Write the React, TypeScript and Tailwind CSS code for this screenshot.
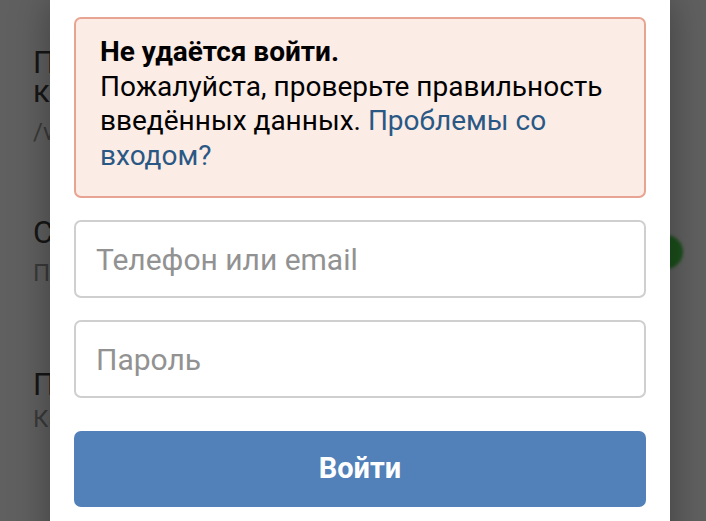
import React from 'react';

const font = { fontFamily: 'Roboto, "Noto Sans", Arial, sans-serif' };

function BackgroundPage() {
  return (
    <div className="flex flex-col pl-[33px] pr-[23px] pt-[48px]">
      <div className="flex flex-col">
        <span className="text-[31px] leading-[29px] text-[#161616]">Привязка аккаунта к</span>
        <span className="text-[31px] leading-[29px] text-[#161616]">короткому адресу</span>
        <span className="mt-[12px] text-[24px] leading-[28px] text-[#3a3a3a]">/vk.com/id</span>
      </div>
      <div className="mt-[70px] flex items-center justify-between">
        <div className="flex flex-col">
          <span className="text-[31px] leading-[34px] text-[#161616]">Сохранять вход</span>
          <span className="mt-[8px] text-[24px] leading-[30px] text-[#3a3a3a]">Помнить меня на этом устройстве</span>
        </div>
        <div className="h-[34px] w-[34px] rounded-full bg-[#1b4f1b] blur-[1.5px]" />
      </div>
      <div className="mt-[80px] flex flex-col">
        <span className="text-[31px] leading-[34px] text-[#161616]">Пароль приложения</span>
        <span className="mt-[2px] text-[24px] leading-[30px] text-[#3a3a3a]">Каждый раз запрашивать</span>
      </div>
    </div>
  );
}

function LoginModal() {
  return (
    <div className="absolute left-[50px] top-0 w-[620px] h-[560px] bg-white px-[24px] pt-[17px] shadow-[0_0_36px_rgba(0,0,0,0.35)]">
      <div className="rounded-[7px] border-2 border-[#e8a492] bg-[#fcece6] pl-[24px] pr-[20px] pt-[16px] pb-[23px] text-[28px] leading-[34.5px] text-black">
        <div className="font-bold">Не удаётся войти.</div>
        <div>
          Пожалуйста, проверьте правильность введённых данных.{' '}
          <span className="text-[#2a5885]">Проблемы со входом?</span>
        </div>
      </div>

      <div className="mt-[22px] flex flex-col gap-[22px]">
        <input
          className="h-[78px] w-full rounded-[7px] border-2 border-[#cfcfcf] bg-white px-[20px] text-[30px] text-black outline-none placeholder:text-[#929292]"
          style={font}
          placeholder="Телефон или email"
        />
        <input
          type="password"
          className="h-[78px] w-full rounded-[7px] border-2 border-[#cfcfcf] bg-white px-[20px] text-[30px] text-black outline-none placeholder:text-[#929292]"
          style={font}
          placeholder="Пароль"
        />
      </div>

      <button className="mt-[33px] flex h-[76px] w-full items-center justify-center rounded-[7px] bg-[#5181b8] text-[29px] font-bold text-white">
        Войти
      </button>
    </div>
  );
}

export default function App() {
  return (
    <div className="relative h-[521px] w-[706px] overflow-hidden bg-[#606060]" style={font}>
      <BackgroundPage />
      <LoginModal />
    </div>
  );
}
